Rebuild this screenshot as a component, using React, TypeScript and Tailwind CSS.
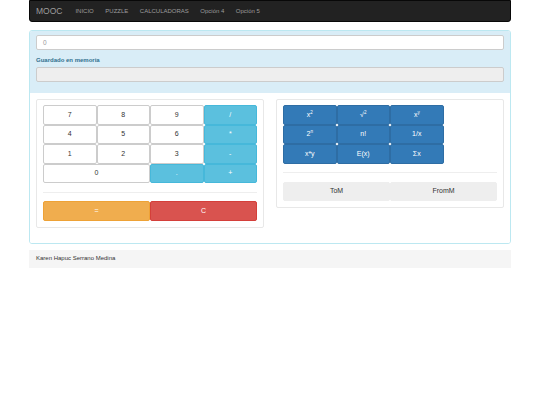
import React from "react";

const F = { fontFamily: '"Liberation Sans", Arial, sans-serif' };

function Btn({ children, cls }: { children: React.ReactNode; cls: string }) {
  return (
    <div className={`flex items-center justify-center h-[19.5px] rounded-[2px] border text-[7px] ${cls}`}>
      {children}
    </div>
  );
}

const def = "bg-white border-[#ccc] text-[#333]";
const info = "bg-[#5bc0de] border-[#46b8da] text-white";
const prim = "bg-[#337ab7] border-[#2e6da4] text-white";

export default function App() {
  return (
    <div style={F} className="w-[540px] h-[405px] bg-white">
      <div className="mx-auto w-[482px]">
        <nav className="h-[22px] bg-[#222] border border-[#080808] rounded-b-[3px] flex items-center pl-[6px] text-[#9d9d9d]">
          <span className="text-[8.5px] mr-[13px]">MOOC</span>
          <span className="text-[6px] mr-[11.5px]">INICIO</span>
          <span className="text-[6px] mr-[11.5px]">PUZZLE</span>
          <span className="text-[6px] mr-[11.5px]">CALCULADORAS</span>
          <span className="text-[6px] mr-[11.5px]">Opción 4</span>
          <span className="text-[6px]">Opción 5</span>
        </nav>

        <div className="mt-[8px] border border-[#bce8f1] rounded-[3px] overflow-hidden">
          <div className="bg-[#d9edf7] px-[6px] pt-[4px] pb-[11px]">
            <div className="h-[15px] bg-white border border-[#ccc] rounded-[2px] flex items-center px-[6px] text-[6.5px] text-[#999]">
              0
            </div>
            <div className="mt-[6px] text-[6px] font-bold text-[#31708f] leading-[8px]">Guardado en memoria</div>
            <div className="mt-[3px] h-[15px] bg-[#eee] border border-[#ccc] rounded-[2px]" />
          </div>

          <div className="bg-white px-[6px] pt-[6px] pb-[15px] grid grid-cols-2 gap-[12px] items-start">
            <div className="border border-[#e8e8e8] rounded-[2px] px-[6px] pt-[5px] pb-[6px]">
              <div className="grid grid-cols-4">
                <Btn cls={def}>7</Btn>
                <Btn cls={def}>8</Btn>
                <Btn cls={def}>9</Btn>
                <Btn cls={info}>/</Btn>
                <Btn cls={def}>4</Btn>
                <Btn cls={def}>5</Btn>
                <Btn cls={def}>6</Btn>
                <Btn cls={info}>*</Btn>
                <Btn cls={def}>1</Btn>
                <Btn cls={def}>2</Btn>
                <Btn cls={def}>3</Btn>
                <Btn cls={info}>-</Btn>
                <div className="col-span-2">
                  <Btn cls={def}>0</Btn>
                </div>
                <Btn cls={info}>.</Btn>
                <Btn cls={info}>+</Btn>
              </div>
              <div className="my-[8.5px] border-t border-[#eee]" />
              <div className="grid grid-cols-2">
                <Btn cls="bg-[#f0ad4e] border-[#eea236] text-white">=</Btn>
                <Btn cls="bg-[#d9534f] border-[#d43f3a] text-white">C</Btn>
              </div>
            </div>

            <div className="border border-[#e8e8e8] rounded-[2px] px-[6px] pt-[5px] pb-[6px]">
              <div className="grid grid-cols-4">
                <Btn cls={prim}>
                  x<sup className="text-[4.5px]">2</sup>
                </Btn>
                <Btn cls={prim}>
                  √<sup className="text-[4.5px]">2</sup>
                </Btn>
                <Btn cls={prim}>
                  x<sup className="text-[4.5px]">y</sup>
                </Btn>
                <div />
                <Btn cls={prim}>
                  2<sup className="text-[4.5px]">n</sup>
                </Btn>
                <Btn cls={prim}>n!</Btn>
                <Btn cls={prim}>1/x</Btn>
                <div />
                <Btn cls={prim}>x*y</Btn>
                <Btn cls={prim}>E(x)</Btn>
                <Btn cls={prim}>Σx</Btn>
                <div />
              </div>
              <div className="my-[8.5px] border-t border-[#eee]" />
              <div className="grid grid-cols-2">
                <Btn cls="bg-[#eee] border-[#eee] text-[#333]">ToM</Btn>
                <Btn cls="bg-[#eee] border-[#eee] text-[#333]">FromM</Btn>
              </div>
            </div>
          </div>
        </div>

        <div className="mt-[6px] h-[18px] bg-[#f5f5f5] flex items-center px-[7px] text-[6px] text-[#333]">
          Karen Hapuc Serrano Medina
        </div>
      </div>
    </div>
  );
}
